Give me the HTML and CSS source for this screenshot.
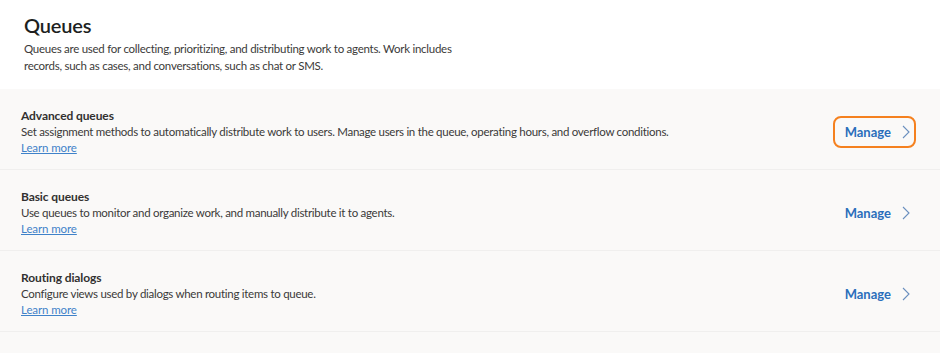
FILE: index.html
```html
<!DOCTYPE html>
<html lang="en">
<head>
  <meta charset="UTF-8">
  <meta name="viewport" content="width=device-width, initial-scale=1.0">
  <title>Queues</title>
  <link rel="stylesheet" href="styles.css">
</head>
<body>

  <!-- Page header -->
  <div class="header">
    <h1>Queues</h1>
    <p>Queues are used for collecting, prioritizing, and distributing work to agents. Work includes<br>records, such as cases, and conversations, such as chat or SMS.</p>
  </div>

  <!-- Settings list -->
  <div class="list">
    <div class="row">
      <div class="info">
        <div class="name">Advanced queues</div>
        <div class="desc">Set assignment methods to automatically distribute work to users. Manage users in the queue, operating hours, and overflow conditions.</div>
        <a href="#" class="learn">Learn more</a>
      </div>
      <a href="#" class="manage highlight">Manage
        <svg width="10" height="14" viewBox="0 0 10 14"><path d="M2 1 L8 7 L2 13" fill="none" stroke="#6a8fbf" stroke-width="1.1"/></svg>
      </a>
    </div>

    <div class="row">
      <div class="info">
        <div class="name">Basic queues</div>
        <div class="desc">Use queues to monitor and organize work, and manually distribute it to agents.</div>
        <a href="#" class="learn">Learn more</a>
      </div>
      <a href="#" class="manage">Manage
        <svg width="10" height="14" viewBox="0 0 10 14"><path d="M2 1 L8 7 L2 13" fill="none" stroke="#6a8fbf" stroke-width="1.1"/></svg>
      </a>
    </div>

    <div class="row">
      <div class="info">
        <div class="name">Routing dialogs</div>
        <div class="desc">Configure views used by dialogs when routing items to queue.</div>
        <a href="#" class="learn">Learn more</a>
      </div>
      <a href="#" class="manage">Manage
        <svg width="10" height="14" viewBox="0 0 10 14"><path d="M2 1 L8 7 L2 13" fill="none" stroke="#6a8fbf" stroke-width="1.1"/></svg>
      </a>
    </div>
  </div>

</body>
</html>
```

FILE: styles.css
```css
body {
  font-family: Lato, Arial, sans-serif;
  background-color: #faf9f8;
  color: #323130;
  margin: 0;
  padding: 0;
}
.header {
  background-color: #ffffff;
  padding: 13px 24px 0 24px;
  box-sizing: border-box;
  height: 89px;
}
h1 {
  font-size: 20px;
  font-weight: 600;
  letter-spacing: -0.2px;
  color: #201f1e;
  margin: 0;
  line-height: 24px;
}
.header p {
  font-size: 11.5px;
  letter-spacing: -0.27px;
  line-height: 17px;
  margin: 3px 0 0 0;
  color: #3b3a39;
}
.row {
  display: flex;
  align-items: center;
  justify-content: space-between;
  padding: 6px 24px 0 21px;
  box-sizing: border-box;
  height: 81px;
  border-bottom: 1px solid #f0efee;
}
.info {
  display: flex;
  flex-direction: column;
  align-items: flex-start;
}
.name {
  font-size: 12px;
  font-weight: 700;
  letter-spacing: -0.1px;
  line-height: 16px;
  margin-bottom: 0;
  color: #323130;
}
.desc {
  font-size: 11.5px;
  letter-spacing: -0.28px;
  line-height: 16px;
  color: #3b3a39;
}
.learn {
  font-size: 11.5px;
  letter-spacing: -0.1px;
  line-height: 16px;
  color: #3f82c9;
}
.manage {
  display: flex;
  align-items: center;
  gap: 10px;
  font-size: 13px;
  font-weight: 700;
  color: #2a6ebb;
  text-decoration: none;
  padding: 6px 3px 6px 10px;
  border: 2px solid transparent;
  border-radius: 8px;
}
.manage.highlight {
  border-color: #f5811f;
}
```
